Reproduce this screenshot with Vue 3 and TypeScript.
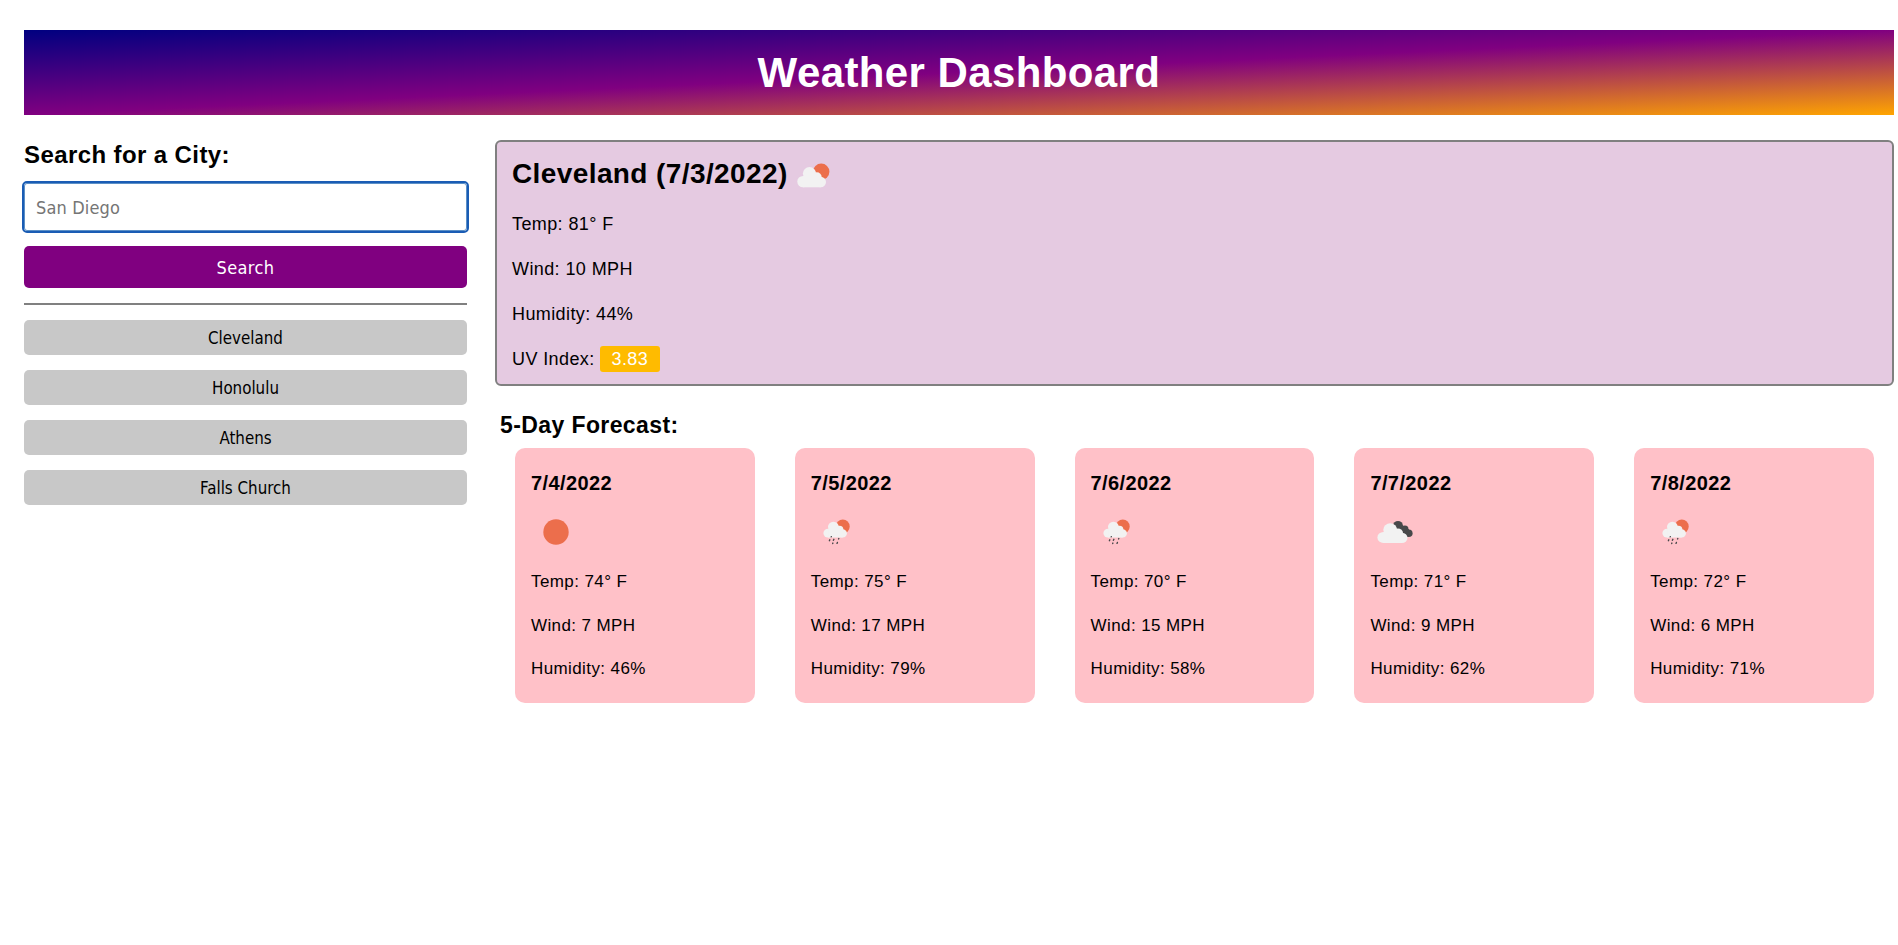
<script setup lang="ts">
import { ref } from 'vue'

type Icon = 'sun' | 'rain' | 'clouds'

interface Day {
  date: string
  icon: Icon
  temp: number
  wind: number
  humidity: number
}

const query = ref('')
const cities: string[] = ['Cleveland', 'Honolulu', 'Athens', 'Falls Church']
const days: Day[] = [
  { date: '7/4/2022', icon: 'sun', temp: 74, wind: 7, humidity: 46 },
  { date: '7/5/2022', icon: 'rain', temp: 75, wind: 17, humidity: 79 },
  { date: '7/6/2022', icon: 'rain', temp: 70, wind: 15, humidity: 58 },
  { date: '7/7/2022', icon: 'clouds', temp: 71, wind: 9, humidity: 62 },
  { date: '7/8/2022', icon: 'rain', temp: 72, wind: 6, humidity: 71 },
]
</script>

<template>
  <div class="page">
    <header class="banner"><h1>Weather Dashboard</h1></header>
    <div class="columns">
      <aside class="sidebar">
        <h2>Search for a City:</h2>
        <input v-model="query" class="field" type="text" placeholder="San Diego" />
        <button class="search">Search</button>
        <hr />
        <div class="history">
          <button v-for="city in cities" :key="city" class="city">{{ city }}</button>
        </div>
      </aside>
      <main class="content">
        <section class="current">
          <h2>
            <span>Cleveland (7/3/2022)</span>
            <svg class="now-icon" viewBox="0 0 50 50">
              <defs>
                <g id="cloud" fill="#f2f2f2">
                  <circle cx="5.7" cy="14.6" r="5.7" />
                  <circle cx="12.2" cy="6.6" r="6.6" />
                  <circle cx="19.5" cy="10.2" r="4.9" />
                  <circle cx="23.4" cy="15" r="5.3" />
                  <rect x="5.7" y="9" width="17.7" height="11.3" />
                </g>
              </defs>
              <circle cx="33.2" cy="22.7" r="8.2" fill="#ec6e4c" />
              <use href="#cloud" x="9.3" y="18" />
            </svg>
          </h2>
          <p>Temp: 81° F</p>
          <p>Wind: 10 MPH</p>
          <p>Humidity: 44%</p>
          <p class="uv-row">UV Index: <span class="uv">3.83</span></p>
        </section>
        <h3>5-Day Forecast:</h3>
        <section class="forecast">
          <article v-for="day in days" :key="day.date" class="card">
            <h4>{{ day.date }}</h4>
            <svg class="icon" viewBox="0 0 50 50">
              <circle v-if="day.icon === 'sun'" cx="25" cy="25" r="12.7" fill="#ec6e4c" />
              <g v-else-if="day.icon === 'rain'">
                <circle cx="31.8" cy="19.5" r="6.9" fill="#ec6e4c" />
                <use href="#cloud" transform="translate(12.4 14.7) scale(.82 .78)" />
                <path
                  fill="none"
                  stroke="#48484a"
                  stroke-width="1.4"
                  stroke-linecap="round"
                  d="M20.3 29.6l-.1.3M18.8 32.8l-.4.9M22.9 32.3l-.5 1M27.8 31.6l-.2.3M21.9 36.1l-.2.4M26.4 35.4l-.4 1"
                />
              </g>
              <g v-else>
                <g fill="#48484a">
                  <circle cx="28" cy="18.8" r="4.9" />
                  <circle cx="34.9" cy="22.2" r="3.6" />
                  <circle cx="38.8" cy="26.3" r="3.8" />
                  <path d="M26 20l6-2 7 4.5-1 7.6-4-.5z" />
                </g>
                <use href="#cloud" transform="translate(7.4 16.3) scale(1.05 .97)" />
              </g>
            </svg>
            <p>Temp: {{ day.temp }}° F</p>
            <p>Wind: {{ day.wind }} MPH</p>
            <p>Humidity: {{ day.humidity }}%</p>
          </article>
        </section>
      </main>
    </div>
  </div>
</template>

<style>
body {
  margin: 0;
  background: #fff;
}
</style>

<style scoped>
.page {
  padding: 30px 4px 0 24px;
  font-family: "Liberation Sans", Arial, sans-serif;
  letter-spacing: 0.4px;
  color: #000;
}
* {
  box-sizing: border-box;
}
h1,
h2,
h3,
h4,
p {
  margin: 0;
}
.banner {
  height: 85px;
  display: flex;
  align-items: center;
  justify-content: center;
  background: linear-gradient(to bottom right, navy, purple, orange);
  color: #fff;
}
h1 {
  font-size: 42px;
  line-height: 48px;
}
.columns {
  display: flex;
  gap: 28px;
  padding-top: 25px;
}
.sidebar {
  width: 443px;
  flex: none;
}
.sidebar h2 {
  font-size: 24px;
  line-height: 28px;
  padding-top: 1px;
  margin-bottom: 14px;
}
.field,
button {
  display: block;
  width: 100%;
  border: 0;
  border-radius: 5px;
  font-family: "DejaVu Sans Condensed", "DejaVu Sans", sans-serif;
  font-stretch: condensed;
}
.field {
  height: 48px;
  padding: 0 11px;
  border: 1px solid #5b8fc6;
  border-radius: 3px;
  outline: 2px solid #1a5cb4;
  font-size: 18px;
  letter-spacing: 0.15px;
}
.field::placeholder {
  color: #757575;
}
.search {
  height: 42px;
  margin-top: 15px;
  background: purple;
  color: #fff;
  font-size: 18px;
  letter-spacing: 0.4px;
}
hr {
  height: 2px;
  margin: 15px 0;
  border: 0;
  background: gray;
}
.history {
  display: grid;
  gap: 15px;
}
.city {
  height: 35px;
  padding-top: 2px;
  background: #c8c8c8;
  color: #000;
  font-size: 16.8px;
}
.content {
  flex: 1;
  min-width: 0;
}
.current {
  height: 246px;
  border: 2px solid gray;
  border-radius: 6px;
  background: #e5cae1;
  padding: 7px 15px 0;
}
.current h2 {
  display: flex;
  align-items: center;
  height: 50px;
  font-size: 28px;
  line-height: 50px;
}
.now-icon {
  width: 50px;
  height: 50px;
}
.current p {
  font-size: 18px;
  line-height: 25px;
  margin-top: 20px;
}
.current h2 + p {
  margin-top: 13px;
}
.current .uv-row {
  margin-top: 19px;
}
.uv {
  display: inline-block;
  height: 26px;
  line-height: 26px;
  padding: 0 11.5px;
  border-radius: 3px;
  background: #fb0;
  color: #fff;
}
h3 {
  margin: 25px 0 0 5px;
  font-size: 23px;
  line-height: 28px;
}
.forecast {
  display: grid;
  grid-template-columns: repeat(5, 1fr);
  margin-top: 9px;
}
.card {
  height: 255px;
  margin: 0 20px;
  padding: 23px 16px 0;
  border-radius: 10px;
  background: #ffc1c8;
}
h4 {
  font-size: 20px;
  line-height: 24px;
}
.icon {
  display: block;
  width: 50px;
  height: 50px;
  margin: 12px 0 15px;
}
.card p {
  font-size: 17px;
  line-height: 20px;
  margin-bottom: 23.5px;
}
</style>
